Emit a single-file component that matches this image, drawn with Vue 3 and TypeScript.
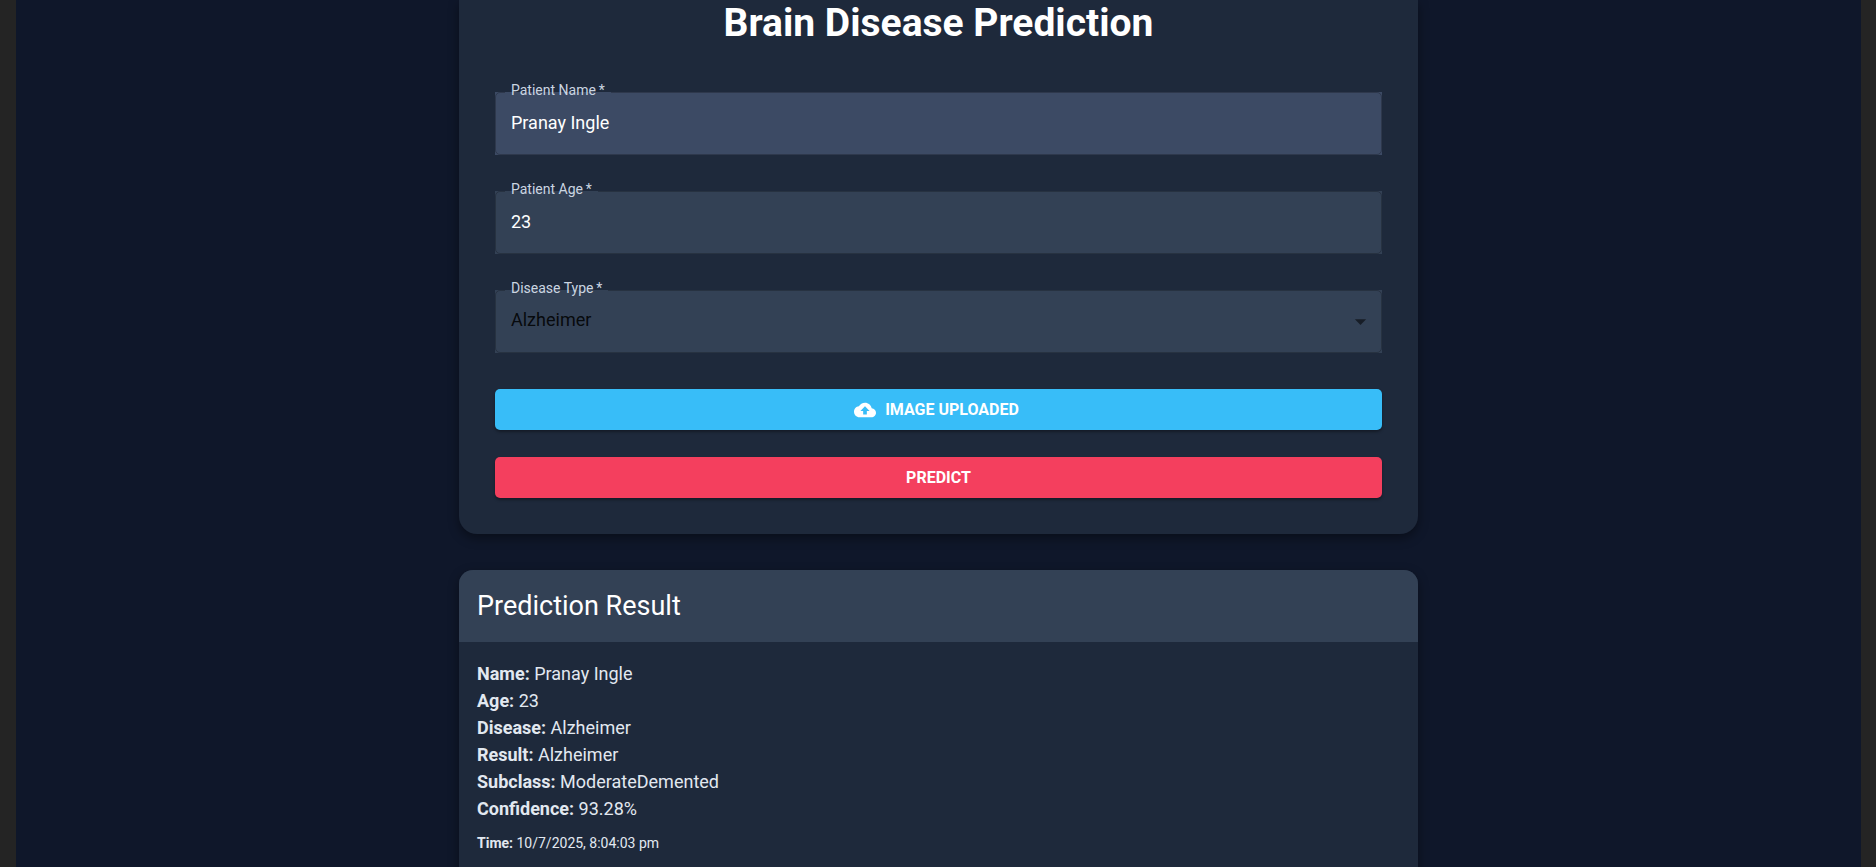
<script setup lang="ts">
import { ref } from 'vue'

interface ResultRow {
  label: string
  value: string
}

const patientName = ref<string>('Pranay Ingle')
const patientAge = ref<string>('23')
const disease = ref<string>('Alzheimer')

const rows: ResultRow[] = [
  { label: 'Name:', value: 'Pranay Ingle' },
  { label: 'Age:', value: '23' },
  { label: 'Disease:', value: 'Alzheimer' },
  { label: 'Result:', value: 'Alzheimer' },
  { label: 'Subclass:', value: 'ModerateDemented' },
  { label: 'Confidence:', value: '93.28%' },
]
</script>

<template>
  <div class="page">
    <main class="content">
      <section class="card form-card">
        <h1>Brain Disease Prediction</h1>
        <form @submit.prevent>
          <div class="field filled">
            <label for="patient-name">Patient Name&thinsp;*</label>
            <input id="patient-name" v-model="patientName" type="text" />
          </div>
          <div class="field">
            <label for="patient-age">Patient Age&thinsp;*</label>
            <input id="patient-age" v-model="patientAge" type="text" inputmode="numeric" />
          </div>
          <div class="field">
            <label for="disease-type">Disease Type&thinsp;*</label>
            <select id="disease-type" v-model="disease">
              <option>Alzheimer</option>
            </select>
            <svg class="arrow" viewBox="0 0 24 24" aria-hidden="true"><path d="M7 10l5 5 5-5z" /></svg>
          </div>
          <button class="upload" type="button">
            <svg class="cloud" viewBox="0 0 24 24" aria-hidden="true">
              <path d="M19.35 10.04C18.67 6.59 15.64 4 12 4 9.11 4 6.6 5.64 5.35 8.04 2.34 8.36 0 10.91 0 14c0 3.31 2.69 6 6 6h13c2.76 0 5-2.24 5-5 0-2.64-2.05-4.78-4.65-4.96M14 13v4h-4v-4H7l5-5 5 5z" />
            </svg>
            IMAGE UPLOADED
          </button>
          <button class="predict" type="submit">PREDICT</button>
        </form>
      </section>

      <section class="card result-card">
        <h2>Prediction Result</h2>
        <div class="result-body">
          <p v-for="row in rows" :key="row.label"><strong>{{ row.label }}</strong> {{ row.value }}</p>
          <p class="time"><strong>Time:</strong> 10/7/2025, 8:04:03 pm</p>
        </div>
      </section>
    </main>
  </div>
</template>

<style>
body {
  margin: 0;
  background: #242424;
}
</style>

<style scoped>
* {
  box-sizing: border-box;
}

.page {
  height: 100vh;
  overflow: hidden;
  margin: 0 15px 0 16px;
  background: #0f172a;
  font-family: Roboto, sans-serif;
  font-size: 18px;
}

.content {
  display: flex;
  flex-direction: column;
  gap: 36px;
  max-width: 959px;
  min-height: 100vh;
  margin: 0 auto;
}

.card {
  background: #1e293b;
  box-shadow: 0 4px 11px rgba(0, 0, 0, 0.4);
}

.form-card {
  padding: 0 36px 36px;
  border-radius: 0 0 18px 18px;
}

h1 {
  margin: 0 0 45px;
  color: #fff;
  font-size: 39px;
  font-weight: 700;
  line-height: 47px;
  text-align: center;
}

form {
  display: flex;
  flex-direction: column;
}

.field {
  position: relative;
  margin-bottom: 36px;
  --fill: #334155;
  background: var(--fill);
}

.field.filled {
  --fill: #3c4a64;
}

.field::after {
  content: '';
  position: absolute;
  inset: 0;
  border: 1px solid rgba(0, 0, 0, 0.23);
  border-radius: 5px;
  pointer-events: none;
}

label {
  position: absolute;
  z-index: 1;
  top: -10px;
  left: 10px;
  padding: 0 6px;
  color: #cbd5e1;
  font-size: 14px;
  line-height: 16px;
}

label::before {
  content: '';
  position: absolute;
  z-index: -1;
  top: 10px;
  left: 0;
  right: 0;
  height: 1px;
  background: var(--fill);
}

input,
select {
  display: block;
  width: 100%;
  height: 63px;
  margin: 0;
  padding: 0 16px 2px;
  border: 0;
  border-radius: 0;
  outline: 0;
  appearance: none;
  background: transparent;
  color: #fff;
  font: inherit;
}

select {
  padding-bottom: 4px;
  color: rgba(0, 0, 0, 0.87);
}

.arrow {
  position: absolute;
  top: 18px;
  right: 8px;
  width: 27px;
  height: 27px;
  fill: rgba(0, 0, 0, 0.54);
  pointer-events: none;
}

button {
  display: flex;
  align-items: center;
  justify-content: center;
  gap: 9px;
  width: 100%;
  padding: 7px 18px;
  border: 0;
  border-radius: 5px;
  box-shadow: 0 2px 3px rgba(0, 0, 0, 0.35);
  color: #fff;
  font-family: inherit;
  font-size: 16px;
  font-weight: 700;
  line-height: 27px;
}

.upload {
  margin-bottom: 27px;
  background: #38bdf8;
}

.predict {
  background: #f43f5e;
}

.cloud {
  width: 22px;
  height: 22px;
  margin-left: -4px;
  fill: currentColor;
}

.result-card {
  flex: 1;
  border-radius: 14px 14px 0 0;
  overflow: hidden;
}

h2 {
  margin: 0;
  padding: 18px;
  background: #334155;
  color: #fff;
  font-size: 27px;
  font-weight: 400;
  line-height: 36px;
}

.result-body {
  padding: 18px;
  color: #e2e8f0;
}

p {
  margin: 0;
  line-height: 27px;
}

.time {
  margin-top: 9px;
  font-size: 14px;
  line-height: 24px;
}
</style>
